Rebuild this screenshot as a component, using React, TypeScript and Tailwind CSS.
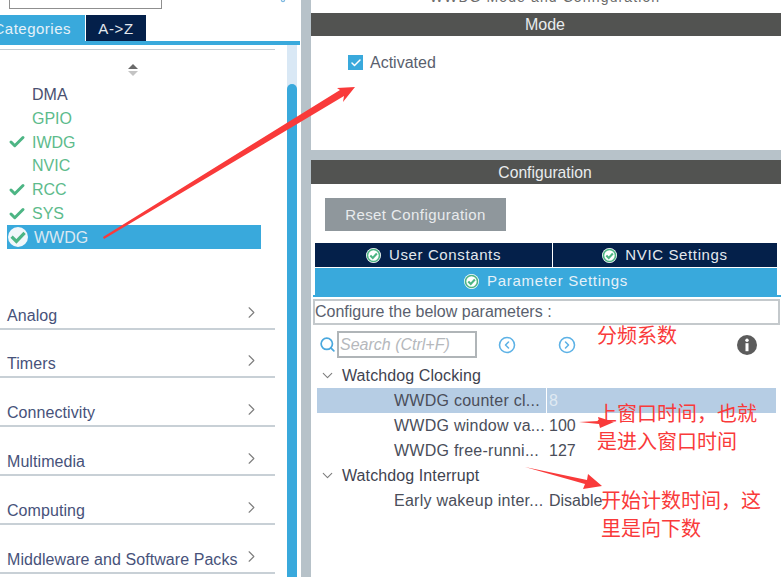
import { Check, ChevronDown, ChevronRight, CircleChevronLeft, CircleChevronRight, Search, Settings } from "lucide-react";

const peripherals = [
  { label: "DMA", color: "text-[#4a5070]", check: false },
  { label: "GPIO", color: "text-[#5dbb8c]", check: false },
  { label: "IWDG", color: "text-[#5dbb8c]", check: true },
  { label: "NVIC", color: "text-[#5dbb8c]", check: false },
  { label: "RCC", color: "text-[#5dbb8c]", check: true },
  { label: "SYS", color: "text-[#5dbb8c]", check: true },
];

const categories = ["Analog", "Timers", "Connectivity", "Multimedia", "Computing", "Middleware and Software Packs"];

const params = [
  { label: "WWDG counter cl...", value: "8", selected: true },
  { label: "WWDG window va...", value: "100", selected: false },
  { label: "WWDG free-runni...", value: "127", selected: false },
];

function GreenCheck({ size = 15 }: { size?: number }) {
  return (
    <svg width={size} height={size} viewBox="0 0 16 16" className="shrink-0">
      <circle cx="8" cy="8" r="8" fill="#ffffff" />
      <circle cx="8" cy="8" r="6.4" fill="none" stroke="#4db584" strokeWidth="1.7" />
      <path d="M4.6 8 7.2 10.6 11.6 5.8" fill="none" stroke="#4db584" strokeWidth="2.2" />
    </svg>
  );
}

function SelectedCheck() {
  return (
    <svg width="20" height="20" viewBox="0 0 20 20" className="shrink-0">
      <circle cx="10" cy="10" r="10" fill="#f2f7fa" />
      <path d="M3.6 9.6 8.4 14.4 16.6 5.8" fill="none" stroke="#4db584" strokeWidth="3.2" />
    </svg>
  );
}

function Note({ children }: { children: string }) {
  return <div className="h-[28px] leading-[28px] whitespace-nowrap">{children}</div>;
}

export default function App() {
  return (
    <div className="relative flex w-[781px] h-[577px] overflow-hidden bg-white font-['Liberation_Sans',sans-serif]">
      {/* left panel */}
      <div className="w-[301px] shrink-0 flex flex-col">
        <div className="h-[15px] shrink-0 flex justify-between pl-[9px] pr-[10px] overflow-hidden">
          <div className="w-[153px] h-[9px] border border-[#8f8f8f] border-t-0 bg-white" />
          <Settings size={16} className="-mt-[13px] text-[#7db8e0]" />
        </div>
        <div className="h-[26px] shrink-0 flex gap-px">
          <div className="w-[85px] bg-[#39a9dc] text-[#e6f1f8] text-[15px] tracking-[0.5px] leading-[27px] flex justify-end pr-[14px] overflow-hidden whitespace-nowrap">
            Categories
          </div>
          <div className="w-[60px] bg-[#04204a] text-[#e3e8ee] text-[15px] tracking-[0.6px] leading-[27px] text-center">A-&gt;Z</div>
        </div>
        <div className="h-[4px] shrink-0 w-[300px] bg-[#39a9dc]" />
        <div className="flex-1 flex min-h-0">
          <div className="w-[287px] shrink-0 flex flex-col">
            <div className="mt-[4px] h-[1px] w-[275px] bg-[#c4ccd2]" />
            <div className="h-[32px] shrink-0 w-[265px] flex flex-col items-center justify-center gap-[2px] pt-[8px]">
              <div className="w-0 h-0 border-x-[5px] border-x-transparent border-b-[5px] border-b-[#6a6a6a]" />
              <div className="w-0 h-0 border-x-[5px] border-x-transparent border-t-[5px] border-t-[#c4c4c4]" />
            </div>
            {peripherals.map((p) => (
              <div key={p.label} className="h-[23.8px] shrink-0 flex items-center pl-[8px] pt-[2px]">
                <div className="w-[24px] shrink-0">{p.check && <Check size={18} strokeWidth={4} className="text-[#4db584]" />}</div>
                <span className={`text-[16px] ${p.color}`}>{p.label}</span>
              </div>
            ))}
            <div className="h-[24px] shrink-0 w-[254px] ml-[7px] bg-[#39a9dc] flex items-center gap-[6px] pl-[1px]">
              <SelectedCheck />
              <span className="text-[16px] text-[#dbe8f2] mt-[2px]">WWDG</span>
            </div>
            <div className="h-[32px] shrink-0" />
            {categories.map((c) => (
              <div key={c} className="h-[48.8px] shrink-0 w-[275px] border-b-2 border-[#c8d0d6] flex items-end justify-between pl-[7px] pr-[18px]">
                <span className="text-[16px] tracking-[0.07px] text-[#47527a] whitespace-nowrap">{c}</span>
                <ChevronRight size={19} strokeWidth={1.4} className="text-[#7d7d7d] mb-[6px] -mr-[4px]" />
              </div>
            ))}
          </div>
          <div className="w-[10px] shrink-0 bg-[#d9e8f5] pt-[39px]">
            <div className="h-full rounded-t-[5px] bg-[#39a9dc]" />
          </div>
        </div>
      </div>
      <div className="w-[10px] shrink-0 bg-[#b7c2c9]" />

      {/* right panel */}
      <div className="flex-1 min-w-0 flex flex-col">
        <div className="h-[13px] shrink-0 overflow-hidden text-center text-[14px] leading-[4px] tracking-[1.1px] text-[#6b6b6b] whitespace-nowrap">
          <div className="-mt-[5px] pr-[2px]">WWDG Mode and Configuration</div>
        </div>
        <div className="h-[23px] shrink-0 bg-[#525351] text-center pr-[2px] text-[#e9ecee] text-[16px] leading-[24px]">Mode</div>
        <div className="h-[114px] shrink-0 pl-[37px] pt-[15px] flex items-start gap-[7px]">
          <div className="w-[15px] h-[15px] mt-[4px] bg-[#39a9dc] flex items-center justify-center">
            <Check size={12} strokeWidth={3} className="text-white" />
          </div>
          <span className="text-[16px] text-[#5a5f6e]">Activated</span>
        </div>
        <div className="h-[10px] shrink-0 bg-[#b7c2c9]" />
        <div className="h-[24px] shrink-0 bg-[#525351] text-center pr-[2px] text-[#e9ecee] text-[15.7px] leading-[25px]">Configuration</div>
        <div className="pl-[14px] pt-[14px]">
          <div className="w-[181px] h-[33px] bg-[#8f979c] text-[#e8ebed] text-[15px] tracking-[0.43px] leading-[33px] text-center">
            Reset Configuration
          </div>
        </div>
        <div className="mt-[12px] pl-[4px] pr-[4px] flex gap-px h-[24px] shrink-0">
          <div className="w-[237px] bg-[#04204a] text-[#e3e8ee] text-[15px] tracking-[0.62px] pt-px flex items-center justify-center gap-[8px]">
            <GreenCheck />
            User Constants
          </div>
          <div className="flex-1 bg-[#04204a] text-[#e3e8ee] text-[15px] tracking-[0.62px] pt-px flex items-center justify-center gap-[8px]">
            <GreenCheck />
            NVIC Settings
          </div>
        </div>
        <div className="mt-px mx-[4px] h-[27px] shrink-0 bg-[#39a9dc] text-[#e6f1f8] text-[15px] tracking-[0.7px] flex items-center justify-center gap-[8px]">
          <GreenCheck />
          Parameter Settings
        </div>
        <div className="h-[2px] ml-[2px] shrink-0 bg-[#39a9dc]" />
        <div className="mt-[2px] ml-[2px] mr-px h-[26px] shrink-0 border-2 border-[#c4c9cc] text-[16px] text-[#5a5f6e] leading-[22px] whitespace-nowrap">
          Configure the below parameters :
        </div>
        <div className="mt-[6px] h-[27px] shrink-0 flex items-center pl-[8px] pr-[24px]">
          <Search size={17} strokeWidth={2.4} className="text-[#4aa8de] shrink-0" />
          <div className="w-[140px] ml-px h-[27px] border-2 border-[#b0b5b8] text-[#b5b8bc] italic text-[16px] leading-[23px] pl-px whitespace-nowrap overflow-hidden">
            Search (Ctrl+F)
          </div>
          <CircleChevronLeft size={18} strokeWidth={2.1} className="ml-[21px] text-[#5db2e6]" />
          <CircleChevronRight size={18} strokeWidth={2.1} className="ml-[42px] text-[#5db2e6]" />
          <svg width="20" height="20" viewBox="0 0 20 20" className="ml-auto">
            <circle cx="10" cy="10" r="10" fill="#5c5c5c" />
            <circle cx="10" cy="5.2" r="1.7" fill="#fff" />
            <rect x="8.5" y="8.2" width="3" height="8" fill="#fff" />
          </svg>
        </div>
        <div className="mt-[5px] h-[25px] shrink-0 flex items-center pl-[8px] gap-[6px] text-[16px] tracking-[0.1px] text-[#3f4350]">
          <ChevronDown size={17} strokeWidth={1.5} className="text-[#7d7d7d]" />
          Watchdog Clocking
        </div>
        {params.map((p) => (
          <div key={p.label} className={`h-[25px] shrink-0 flex ml-[6px] mr-[5px] ${p.selected ? "bg-[#b6cde4]" : ""}`}>
            <div className="w-[229px] shrink-0 pl-[77px] text-[16px] tracking-[0.25px] leading-[25px] text-[#4a4e5a] whitespace-nowrap">{p.label}</div>
            <div className={`pl-[2px] border-l border-white text-[16px] leading-[25px] ${p.selected ? "text-[#dfe9f2]" : "text-[#4a4e5a]"}`}>{p.value}</div>
          </div>
        ))}
        <div className="h-[25px] shrink-0 flex items-center pl-[8px] gap-[6px] text-[16px] tracking-[0.1px] text-[#3f4350]">
          <ChevronDown size={17} strokeWidth={1.5} className="text-[#7d7d7d]" />
          Watchdog Interrupt
        </div>
        <div className="h-[25px] shrink-0 flex ml-[6px]">
          <div className="w-[231px] shrink-0 pl-[77px] text-[16px] tracking-[0.25px] leading-[25px] text-[#4a4e5a] whitespace-nowrap">Early wakeup inter...</div>
          <div className="pl-[1px] text-[16px] leading-[25px] text-[#4a4e5a]">Disable</div>
        </div>
      </div>

      {/* annotations drawn over the screenshot */}
      <svg width="781" height="577" className="absolute left-0 top-0 pointer-events-none">
        <polygon points="103,237 340,90 337,88 355,87 343,102 344,96 104,239" fill="#f93a3a" />
        <polygon points="579,422 599,421 598,417 614,422 600,428 599,424" fill="#f93a3a" />
        <polygon points="525,467 587,480 588,474 602,486 583,489 585,484" fill="#f93a3a" />
      </svg>
      <div className="absolute left-[597px] top-[321px] text-[20px] leading-[28px] text-[#f93a3a] font-['Noto_Sans_CJK_SC',sans-serif]">分频系数</div>
      <div className="absolute left-[597px] top-[399px] text-[20px] text-[#f93a3a] font-['Noto_Sans_CJK_SC',sans-serif]">
        <Note>上窗口时间，也就</Note>
        <Note>是进入窗口时间</Note>
      </div>
      <div className="absolute left-[601px] top-[486px] text-[20px] text-[#f93a3a] font-['Noto_Sans_CJK_SC',sans-serif]">
        <Note>开始计数时间，这</Note>
        <Note>里是向下数</Note>
      </div>
    </div>
  );
}
